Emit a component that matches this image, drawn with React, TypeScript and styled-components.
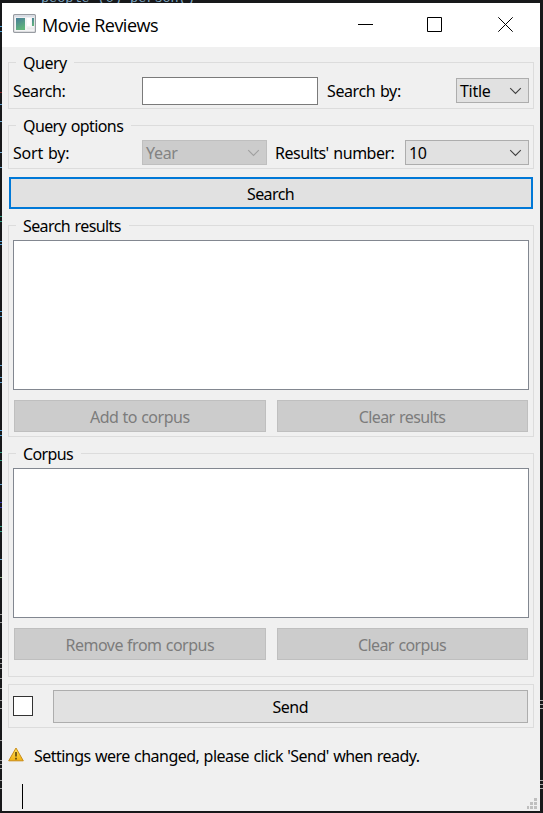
import React from "react";
import styled, { createGlobalStyle } from "styled-components";

const GlobalStyle = createGlobalStyle`
  * { box-sizing: border-box; }
  body { margin: 0; background: #17181a; overflow: hidden; }
`;

const Desktop = styled.div`
  position: relative;
  width: 543px;
  height: 813px;
  padding: 3px 0 0 2px;
  overflow: hidden;
  background: #17181a;
  font: 16px/22px "Noto Sans", "Open Sans", sans-serif;
  color: #000;
`;

const EditorLine = styled.div`
  position: absolute;
  left: 41px;
  top: -9px;
  white-space: pre;
  font: 13.5px/16px "Liberation Mono", monospace;
  color: #7fa8c4;
`;

const EditorMark = styled.i<{ $x: number; $y: number; $c: string }>`
  position: absolute;
  left: ${(p) => p.$x}px;
  top: ${(p) => p.$y}px;
  width: 3px;
  height: 1px;
  background: ${(p) => p.$c};
`;

const Window = styled.main`
  position: relative;
  width: 538px;
  height: 808px;
  background: #f0f0f0;
`;

const TitleBar = styled.header`
  display: flex;
  align-items: center;
  height: 44px;
  padding: 0 13px 0 11px;
  background: #fff;
`;

const AppTitle = styled.h1`
  flex: 1;
  margin: 0 0 1px 6px;
  font: 400 18px/24px "Open Sans", sans-serif;
  letter-spacing: -0.52px;
`;

const WindowControls = styled.div`
  display: grid;
  grid-template-columns: 69px 71px 15px;
  margin-top: -2px;
  padding-right: 14px;
  box-sizing: content-box;
`;

const Body = styled.div`
  display: flex;
  flex-direction: column;
  padding: 15px 6px 0;
`;

const Group = styled.section<{ $h: number; $mb: number }>`
  position: relative;
  width: 526px;
  height: ${(p) => p.$h}px;
  margin-bottom: ${(p) => p.$mb}px;
  padding: 14px 4px 0;
  border: 1px solid #dcdcdc;
`;

const Legend = styled.h2`
  position: absolute;
  left: 7px;
  top: -11px;
  margin: 0;
  padding: 0 8px 0 7px;
  background: #f0f0f0;
  font: inherit;
  white-space: nowrap;
`;

const Condensed = styled.span<{ $w: number; $ls?: number; $ws?: number }>`
  display: inline-block;
  width: ${(p) => p.$w}px;
  letter-spacing: ${(p) => p.$ls ?? -0.5}px;
  word-spacing: ${(p) => p.$ws ?? 0}px;
  white-space: nowrap;
`;

const Row = styled.div`
  display: flex;
  align-items: center;
`;

const FieldLabel = styled.label<{ $w: number; $pl?: number }>`
  width: ${(p) => p.$w}px;
  padding-left: ${(p) => p.$pl ?? 0}px;
`;

const TextField = styled.input`
  width: 176px;
  height: 28px;
  border: 1px solid #7a7a7a;
  border-radius: 0;
  background: #fff;
  outline: none;
`;

const Combo = styled.div<{ $w: number; $off?: boolean; $mb?: number }>`
  display: flex;
  align-items: center;
  justify-content: space-between;
  width: ${(p) => p.$w}px;
  height: 25px;
  margin-bottom: ${(p) => p.$mb ?? 0}px;
  padding: 0 6px 0 3px;
  border: 1px solid ${(p) => (p.$off ? "#bfbfbf" : "#adadad")};
  background: ${(p) => (p.$off ? "#ccc" : "#e1e1e1")};
  color: ${(p) => (p.$off ? "#838383" : "#000")};
`;

const Button = styled.button<{ $w: number; $h?: number; $primary?: boolean }>`
  display: flex;
  align-items: center;
  justify-content: center;
  width: ${(p) => p.$w}px;
  height: ${(p) => p.$h ?? 32}px;
  padding: 2px 1px 0 0;
  border: ${(p) => (p.$primary ? "2px solid #0078d7" : "1px solid #adadad")};
  background: #e1e1e1;
  color: #000;
  font: inherit;
  &:disabled {
    border-color: #bfbfbf;
    background: #ccc;
    color: #7c7c7c;
  }
`;

const SearchSlot = styled.div`
  height: 48px;
  padding-left: 1px;
`;

const ListBox = styled.div`
  width: 516px;
  height: 150px;
  border: 1px solid #828790;
  background: #fff;
`;

const ButtonPair = styled.div`
  display: flex;
  gap: 11px;
  padding: 10px 0 0 1px;
`;

const SendPanel = styled.section`
  display: flex;
  align-items: center;
  width: 526px;
  height: 44px;
  padding: 0 4px;
  border: 1px solid #dcdcdc;
`;

const Checkbox = styled.span`
  width: 20px;
  height: 20px;
  margin-right: 20px;
  border: 1px solid #333;
  background: #fff;
`;

const Status = styled.div`
  display: flex;
  align-items: center;
  gap: 10px;
  height: 22px;
  margin-top: 17px;
`;

const StatusIcon = styled.svg`
  margin-top: -4px;
`;

const Caret = styled.div`
  width: 1px;
  height: 25px;
  margin: 17px 0 0 14px;
  background: #000;
`;

const Grip = styled.svg`
  position: absolute;
  right: 3px;
  bottom: 2px;
`;

const Chevron = ({ off = false }: { off?: boolean }) => (
  <svg width="13" height="8" viewBox="0 0 13 8" fill="none" stroke={off ? "#a0a0a0" : "#404040"} strokeWidth="1.1">
    <path d="M1.2 1.2 6.5 6.5 11.8 1.2" />
  </svg>
);

const AppIconSvg = styled.svg`
  margin-top: -3px;
`;

const AppIcon = () => (
  <AppIconSvg width="23" height="19" viewBox="0 0 23 19">
    <defs>
      <linearGradient id="screen" x1="0" y1="0" x2="0.4" y2="1">
        <stop stopColor="#477c98" />
        <stop offset="1" stopColor="#61b47b" />
      </linearGradient>
    </defs>
    <rect x=".6" y=".6" width="21.8" height="17.8" rx="1" fill="#f4f4f5" stroke="#989ca2" strokeWidth="1.2" />
    <path d="M2 2.2h19" stroke="#d9dde5" strokeWidth="2" />
    <rect x="3" y="4" width="9" height="12" fill="url(#screen)" />
    <rect x="14" y="4" width="3.5" height="8" fill="#fff" />
    <rect x="19" y="4" width="2" height="8" fill="url(#screen)" />
    <path d="M14 14.5h7" stroke="#e9e9e9" strokeWidth="2" />
  </AppIconSvg>
);

const WarningIcon = () => (
  <StatusIcon width="16" height="15" viewBox="0 0 16 15">
    <defs>
      <linearGradient id="warn" x1="0" y1="0" x2="0" y2="1">
        <stop stopColor="#ffe45c" />
        <stop offset="1" stopColor="#f0b010" />
      </linearGradient>
    </defs>
    <path d="M8 1 15.3 13.8H.7Z" fill="url(#warn)" stroke="#c98b16" strokeWidth="1" strokeLinejoin="round" />
    <path d="M8 5v4.5M8 10.8v1.7" stroke="#5a4208" strokeWidth="1.6" />
  </StatusIcon>
);

const marks: [number, number, string][] = [
  [0, 26, "#4a9bd0"], [0, 31, "#4a9bd0"], [0, 92, "#802020"], [0, 104, "#5a9ccc"],
  [0, 121, "#6fa8d0"], [0, 152, "#6fa8d0"], [0, 167, "#6fa8d0"], [0, 216, "#2e9a80"],
  [0, 221, "#2e9a80"], [0, 241, "#4a9bd0"], [0, 244, "#4a9bd0"], [0, 311, "#4a9bd0"],
  [0, 316, "#4a9bd0"], [0, 365, "#5a9ccc"], [0, 377, "#5a9ccc"], [0, 382, "#5a9ccc"],
  [0, 430, "#4a9bd0"], [0, 435, "#4a9bd0"], [0, 452, "#2e9a80"], [0, 460, "#2e9a80"],
  [0, 484, "#5a9ccc"], [0, 502, "#3434b0"], [0, 507, "#3434b0"], [0, 526, "#2e9a80"],
  [0, 531, "#2e9a80"], [0, 559, "#6fa8d0"], [0, 577, "#8cae80"], [0, 614, "#999"],
  [0, 622, "#999"], [0, 658, "#999"], [0, 663, "#999"], [0, 668, "#999"],
  [0, 678, "#999"], [0, 688, "#999"], [0, 700, "#999"], [0, 708, "#999"],
  [0, 740, "#999"], [0, 760, "#999"], [0, 764, "#999"], [0, 768, "#999"],
  [0, 780, "#999"], [0, 788, "#999"], [540, 700, "#aaa"], [540, 704, "#aaa"],
  [540, 708, "#aaa"], [540, 780, "#aaa"], [540, 784, "#aaa"], [540, 788, "#aaa"],
];

export default function App() {
  return (
    <Desktop>
      <GlobalStyle />
      <EditorLine>people'(0) person()</EditorLine>
      {marks.map(([x, y, c]) => (
        <EditorMark key={`${x}-${y}`} $x={x} $y={y} $c={c} />
      ))}
      <Window>
        <TitleBar>
          <AppIcon />
          <AppTitle>Movie Reviews</AppTitle>
          <WindowControls>
            <svg width="15" height="15"><path d="M0 7.5h15" stroke="#000" /></svg>
            <svg width="15" height="15"><path d="M.5.5h14v14H.5Z" fill="none" stroke="#000" /></svg>
            <svg width="15" height="15"><path d="m.3.3 14.4 14.4M14.7.3.3 14.7" stroke="#000" /></svg>
          </WindowControls>
        </TitleBar>
        <Body>
          <Group $h={47} $mb={16}>
            <Legend><Condensed $w={43}>Query</Condensed></Legend>
            <Row>
              <FieldLabel $w={129}><Condensed $w={52} $ls={-0.35}>Search:</Condensed></FieldLabel>
              <TextField />
              <FieldLabel $w={138} $pl={9}><Condensed $w={75} $ls={-0.4} $ws={1}>Search by:</Condensed></FieldLabel>
              <Combo $w={73} $mb={1}><Condensed $w={32} $ls={-0.3}>Title</Condensed><Chevron /></Combo>
            </Row>
          </Group>
          <Group $h={44} $mb={8}>
            <Legend><Condensed $w={100} $ls={-0.6} $ws={1}>Query options</Condensed></Legend>
            <Row>
              <FieldLabel $w={129}><Condensed $w={56} $ls={-0.2} $ws={1}>Sort by:</Condensed></FieldLabel>
              <Combo $w={125} $off><Condensed $w={32} $ls={-0.3}>Year</Condensed><Chevron off /></Combo>
              <FieldLabel $w={138} $pl={8}><Condensed $w={119} $ws={1}>Results' number:</Condensed></FieldLabel>
              <Combo $w={124}><Condensed $w={18}>10</Condensed><Chevron /></Combo>
            </Row>
          </Group>
          <SearchSlot>
            <Button $w={524} $primary><Condensed $w={47} $ls={-0.6}>Search</Condensed></Button>
          </SearchSlot>
          <Group $h={212} $mb={16}>
            <Legend><Condensed $w={98} $ls={-0.6} $ws={1}>Search results</Condensed></Legend>
            <ListBox />
            <ButtonPair>
              <Button $w={252} disabled><Condensed $w={99} $ws={0.5}>Add to corpus</Condensed></Button>
              <Button $w={251} disabled><Condensed $w={87} $ls={-0.6} $ws={1}>Clear results</Condensed></Button>
            </ButtonPair>
          </Group>
          <Group $h={224} $mb={7}>
            <Legend><Condensed $w={50} $ls={-0.65}>Corpus</Condensed></Legend>
            <ListBox />
            <ButtonPair>
              <Button $w={252} disabled><Condensed $w={148} $ws={0.5}>Remove from corpus</Condensed></Button>
              <Button $w={251} disabled><Condensed $w={88} $ls={-0.6} $ws={1}>Clear corpus</Condensed></Button>
            </ButtonPair>
          </Group>
          <SendPanel>
            <Checkbox />
            <Button $w={475} $h={33}><Condensed $w={35}>Send</Condensed></Button>
          </SendPanel>
          <Status>
            <WarningIcon />
            <Condensed $w={386} $ls={-0.53} $ws={0.7}>Settings were changed, please click 'Send' when ready.</Condensed>
          </Status>
          <Caret />
        </Body>
        <Grip width="10" height="11" fill="#bfbfbf">
          <path d="M7 0h3v3H7zM3 4h3v3H3zM7 4h3v3H7zM0 8h2v3H0zM3 8h3v3H3zM7 8h3v3H7z" />
        </Grip>
      </Window>
    </Desktop>
  );
}
